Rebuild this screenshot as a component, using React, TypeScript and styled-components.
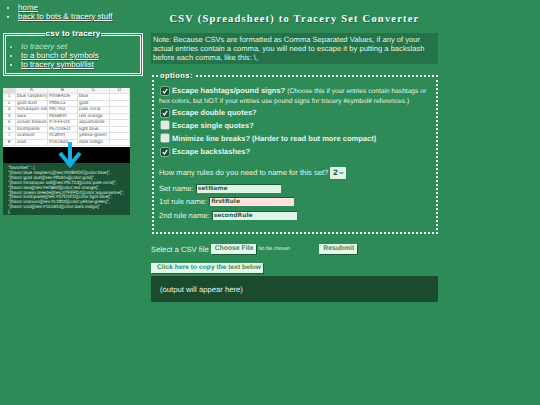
import { createGlobalStyle } from 'styled-components';
import styled from 'styled-components';

const GlobalStyle = createGlobalStyle`
  html, body {
    margin: 0;
    padding: 0;
    background: #2e8b57;
    color: #e0f5e8;
    font-family: "Liberation Sans", Arial, sans-serif;
    text-rendering: geometricPrecision;
  }
`;

const Page = styled.div`
  width: 540px;
  height: 405px;
  overflow: hidden;
  display: grid;
  grid-template-columns: 140px 287px;
  column-gap: 8px;
  padding-left: 3px;
  box-sizing: border-box;
`;

const Sidebar = styled.div`
  display: flex;
  flex-direction: column;
  padding-top: 3px;
`;

const Links = styled.ul`
  margin: 0;
  padding: 0 0 0 15px;
  list-style: disc;
  font-size: 8px;
  line-height: 9px;
  color: #ffffff;
`;

const LinkItem = styled.li`
  text-decoration: underline;
  text-shadow: 0.7px 0.7px 0 #1c5a38;
`;

const CurrentItem = styled.li`
  font-style: italic;
  color: #b9e6c9;
`;

const NavBox = styled.fieldset`
  margin: 10px 0 0;
  padding: 5px 0 0 0;
  width: 140px;
  height: 45px;
  box-sizing: border-box;
  border: 3px double #ffffff;
`;

const NavLegend = styled.legend`
  margin: 0 auto;
  padding: 0 1px;
  font-size: 8px;
  line-height: 6px;
  font-weight: bold;
  letter-spacing: 0.2px;
  color: #ffffff;
  text-shadow: 0.7px 0.7px 0 #1c5a38;
`;

const Sheet = styled.div`
  margin-top: 12px;
  width: 127px;
  height: 59px;
  background: #ffffff;
  display: grid;
  grid-template-columns: 13px 32px 30px 32px 20px;
  grid-auto-rows: 6.45px;
  font-size: 4.9px;
  line-height: 6.45px;
  color: #555555;
`;

const SheetCell = styled.div<{ $fill?: string; $center?: boolean }>`
  padding-left: ${({ $center }) => ($center ? 0 : 1)}px;
  text-align: ${({ $center }) => ($center ? 'center' : 'left')};
  background: ${({ $fill }) => $fill ?? '#ffffff'};
  border-right: 0.5px solid #e0e0e0;
  border-bottom: 0.5px solid #e0e0e0;
  box-sizing: border-box;
  white-space: nowrap;
  overflow: hidden;
`;

const SheetRow = styled.div`
  display: contents;
`;

const BlackBand = styled.div`
  width: 127px;
  height: 16px;
  background: #000000;
`;

const CodePanel = styled.div`
  position: relative;
  width: 127px;
  height: 52px;
  background: #1c5233;
  padding: 3px 0 0 5px;
  box-sizing: border-box;
  font-size: 4.6px;
  line-height: 4.9px;
  color: #d8eee0;
  white-space: nowrap;
`;

const ArrowIcon = styled.svg`
  position: absolute;
  left: 55px;
  top: -21px;
  width: 24px;
  height: 26px;
`;

const Main = styled.div`
  display: flex;
  flex-direction: column;
`;

const Title = styled.h1`
  margin: 14px 0 0;
  height: 19px;
  font-family: "Liberation Serif", "Times New Roman", serif;
  font-size: 10.5px;
  line-height: 12px;
  font-weight: bold;
  letter-spacing: 1.2px;
  text-align: center;
  color: #ffffff;
  text-shadow: 0.7px 0.7px 0 #1c5a38;
`;

const Note = styled.div`
  height: 31px;
  padding: 2px 10px 2px 2px;
  box-sizing: border-box;
  background: #26734a;
  font-size: 7.6px;
  line-height: 9px;
  color: #e0f5e8;
`;

const Options = styled.fieldset`
  margin: 8px 0 0 1px;
  padding: 6px 5px 0;
  height: 162px;
  box-sizing: border-box;
  border: 2px dotted #ffffff;
  min-width: 0;
`;

const OptionsLegend = styled.legend`
  padding: 0 1px;
  margin-left: 0;
  font-size: 7.5px;
  line-height: 8px;
  font-weight: bold;
  letter-spacing: 0.4px;
  color: #ffffff;
  text-shadow: 0.7px 0.7px 0 #1c5a38;
`;

const OptionRow = styled.div<{ $tall?: boolean }>`
  min-height: ${({ $tall }) => ($tall ? 22 : 13)}px;
  font-size: 7.55px;
  line-height: 9px;
  font-weight: bold;
  color: #e6f5ec;
`;

const Hint = styled.span`
  font-size: 6.65px;
  font-weight: normal;
`;

const Check = styled.span<{ $on?: boolean }>`
  display: inline-flex;
  align-items: center;
  justify-content: center;
  width: 8px;
  height: 8px;
  margin: 0 3px 0 2px;
  vertical-align: -1px;
  border-radius: 1px;
  background: ${({ $on }) => ($on ? '#1c4f31' : '#e4e8e4')};
  box-shadow: 0 0 0 0.5px #c7d5cb;
  color: #ffffff;
`;

const CheckMark = styled.svg`
  width: 6px;
  height: 6px;
`;

const CountRow = styled.div`
  margin: 7px 0 2px;
  font-size: 7.6px;
  line-height: 12px;
  display: flex;
  align-items: center;
  gap: 2px;
`;

const CountSelect = styled.span`
  display: inline-flex;
  align-items: center;
  gap: 1px;
  width: 16px;
  height: 12px;
  background: #dff5e7;
  border-radius: 1px;
  color: #1c4f31;
  font-size: 8px;
  font-weight: bold;
  padding-left: 3px;
  box-sizing: border-box;
`;

const NameRow = styled.div`
  margin-top: 4.7px;
  font-size: 7.6px;
  line-height: 9px;
  display: flex;
  align-items: center;
  gap: 2px;
`;

const NameInput = styled.span<{ $pink?: boolean }>`
  display: inline-block;
  width: 85px;
  height: 9px;
  box-sizing: border-box;
  padding-left: 1px;
  background: ${({ $pink }) => ($pink ? '#ffe1e1' : '#dff5e7')};
  border-top: 1px solid #1c5a38;
  border-left: 1px solid #1c5a38;
  font-family: "DejaVu Sans", sans-serif;
  font-size: 6px;
  line-height: 8px;
  font-weight: bold;
  color: #37604a;
`;

const FileRow = styled.div`
  margin-top: 10px;
  height: 10px;
  display: flex;
  align-items: center;
  font-size: 7.7px;
`;

const FlatButton = styled.span<{ $gap?: number; $inset?: number }>`
  display: inline-block;
  height: 10px;
  padding: 0 3px 0 ${({ $inset }) => $inset ?? 4}px;
  margin-left: ${({ $gap }) => $gap ?? 0}px;
  box-sizing: border-box;
  background: #e6f7ec;
  box-shadow: 1px 1px 0 #1c5a38;
  font-size: 6.8px;
  line-height: 10px;
  font-weight: bold;
  color: #2e8b57;
  white-space: nowrap;
`;

const CopyButton = styled(FlatButton)`
  padding-right: 2px;
  font-size: 6.7px;
`;

const NoFile = styled.span`
  margin-left: 2px;
  font-size: 5px;
  width: 61px;
`;

const CopyRow = styled.div`
  margin-top: 9px;
  display: flex;
`;

const Output = styled.div`
  margin-top: 3px;
  height: 26px;
  padding-left: 9px;
  display: flex;
  align-items: center;
  background: #1c4a2e;
  border-radius: 1px;
  font-size: 7.7px;
  color: #e0f5e8;
`;

const rows = [
  ['blue raspberry', '#00BADE', 'blue'],
  ['gold dust', '#ffb61a', 'gold'],
  ['himalayan salt', '#ffc7b3', 'pale coral'],
  ['lava', '#ef3800', 'red orange'],
  ['ocean breeze', '#7FFFD4', 'aquamarine'],
  ['toothpaste', '#57D4ED', 'light blue'],
  ['uranium', '#c3ff00', 'yellow-green'],
  ['void', '#1b1834', 'dark indigo'],
];

const code = [
  '"flavorSet" : [',
  '"[flavor:blue raspberry][hex:#00BADE][color:blue]",',
  '"[flavor:gold dust][hex:#ffb61a][color:gold]",',
  '"[flavor:himalayan salt][hex:#ffc7b3][color:pale coral]",',
  '"[flavor:lava][hex:#ef3800][color:red orange]",',
  '"[flavor:ocean breeze][hex:#7FFFD4][color:aquamarine]",',
  '"[flavor:toothpaste][hex:#57D4ED][color:light blue]",',
  '"[flavor:uranium][hex:#c3ff00][color:yellow-green]",',
  '"[flavor:void][hex:#1b1834][color:dark indigo]"',
  '],',
];

function Tick() {
  return (
    <CheckMark viewBox="0 0 6 6">
      <path d="M0.8 3.2 L2.4 5 L5.2 0.8" fill="none" stroke="#ffffff" strokeWidth="1.2" />
    </CheckMark>
  );
}

function App() {
  return (
    <Page>
      <GlobalStyle />
      <Sidebar>
        <Links>
          <LinkItem>home</LinkItem>
          <LinkItem>back to bots &amp; tracery stuff</LinkItem>
        </Links>

        <NavBox>
          <NavLegend>csv to tracery</NavLegend>
          <Links>
            <CurrentItem>to tracery set</CurrentItem>
            <LinkItem>to a bunch of symbols</LinkItem>
            <LinkItem>to tracery symbol/list</LinkItem>
          </Links>
        </NavBox>

        <Sheet>
          {['', 'A', 'B', 'C', 'D'].map((h) => (
            <SheetCell key={h} $fill={h === '' ? '#dcdcdc' : '#f5f5f5'} $center>
              {h}
            </SheetCell>
          ))}
          {rows.map((row, i) => (
            <SheetRow key={row[0]}>
              <SheetCell $center>{i + 1}</SheetCell>
              {row.map((cell) => (
                <SheetCell key={cell}>{cell}</SheetCell>
              ))}
              <SheetCell />
            </SheetRow>
          ))}
        </Sheet>
        <BlackBand />
        <CodePanel>
          <ArrowIcon viewBox="0 0 24 26">
            <path
              d="M12 0 V22 M2 11 L12 23 L22 11"
              fill="none"
              stroke="#12aee6"
              strokeWidth="4"
            />
          </ArrowIcon>
          {code.map((line) => (
            <div key={line}>{line}</div>
          ))}
        </CodePanel>
      </Sidebar>

      <Main>
        <Title>CSV (Spreadsheet) to Tracery Set Converter</Title>
        <Note>
          Note: Because CSVs are formatted as Comma Separated Values, if any of your actual
          entries contain a comma, you will need to escape it by putting a backslash before
          each comma, like this: \,
        </Note>

        <Options>
          <OptionsLegend>options:</OptionsLegend>
          <OptionRow $tall>
            <Check $on>
              <Tick />
            </Check>
            Escape hashtags/pound signs?{' '}
            <Hint>
              (Choose this if your entries contain hashtags or hex colors, but NOT if your
              entries use pound signs for tracery #symbol# references.)
            </Hint>
          </OptionRow>
          <OptionRow>
            <Check $on>
              <Tick />
            </Check>
            Escape double quotes?
          </OptionRow>
          <OptionRow>
            <Check />
            Escape single quotes?
          </OptionRow>
          <OptionRow>
            <Check />
            Minimize line breaks? (Harder to read but more compact)
          </OptionRow>
          <OptionRow>
            <Check $on>
              <Tick />
            </Check>
            Escape backslashes?
          </OptionRow>

          <CountRow>
            How many rules do you need to name for this set?
            <CountSelect>
              2
              <svg width="5" height="4" viewBox="0 0 5 4">
                <path d="M0.7 1 L2.5 3 L4.3 1" fill="none" stroke="#1c4f31" strokeWidth="0.9" />
              </svg>
            </CountSelect>
          </CountRow>
          <NameRow>
            Set name: <NameInput>setName</NameInput>
          </NameRow>
          <NameRow>
            1st rule name: <NameInput $pink>firstRule</NameInput>
          </NameRow>
          <NameRow>
            2nd rule name: <NameInput>secondRule</NameInput>
          </NameRow>
        </Options>

        <FileRow>
          Select a CSV file
          <FlatButton $gap={2}>Choose File</FlatButton>
          <NoFile>No file chosen</NoFile>
          <FlatButton>Resubmit</FlatButton>
        </FileRow>

        <CopyRow>
          <CopyButton $inset={6}>Click here to copy the text below</CopyButton>
        </CopyRow>
        <Output>(output will appear here)</Output>
      </Main>
    </Page>
  );
}

export default App;
